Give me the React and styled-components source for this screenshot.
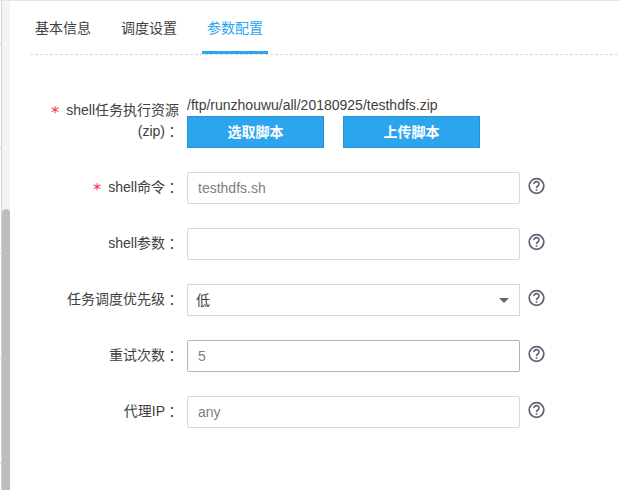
import React from 'react';
import styled, { createGlobalStyle } from 'styled-components';

const GlobalStyle = createGlobalStyle`
  * { box-sizing: border-box; }
  body {
    margin: 0;
    background: #fff;
    color: #404040;
    font: 14px/21px "Liberation Sans", "Noto Sans CJK SC", sans-serif;
  }
  button, input { font: inherit; }
`;

const Page = styled.div`
  display: flex;
  height: 490px;
  overflow: hidden;
  border-top: 1px solid #e2e6ec;
`;

const Gutter = styled.div`
  flex: none;
  width: 2px;
  border-right: 1px solid #c9d3e4;
  padding-top: 42px;
  display: flex;
  flex-direction: column;
  gap: 104px;
`;

const Tick = styled.div`
  flex: none;
  height: 1px;
  background: #c9d3e4;
`;

const ScrollTrack = styled.div`
  flex: none;
  width: 8px;
  padding-top: 208px;
  background: #f4f4f4;
`;

const ScrollThumb = styled.div`
  height: 300px;
  border-radius: 4px;
  background: #bdbdbd;
`;

const Content = styled.main`
  flex: 1;
  padding-left: 20px;
`;

const TabBar = styled.nav`
  display: flex;
  gap: 20px;
  height: 54px;
  background: repeating-linear-gradient(to right, #d9d9d9 0 3px, transparent 3px 5px) left bottom / 588px 1px no-repeat;
`;

const Tab = styled.button`
  width: 66px;
  height: 53px;
  padding: 5px 0 0;
  border: 0;
  border-bottom: 3px solid ${(p) => (p.$active ? '#2ca5ee' : 'transparent')};
  background: none;
  color: ${(p) => (p.$active ? '#2ca5ee' : '#404040')};
  line-height: 21px;
`;

const Form = styled.form`
  display: flex;
  flex-direction: column;
  gap: 24px;
  padding-top: 40px;
`;

const Row = styled.div`
  display: flex;
  min-height: 32px;
`;

const Label = styled.label`
  flex: none;
  width: 149px;
  margin-right: 8px;
  padding-top: 5px;
  text-align: right;
  white-space: nowrap;
`;

const Colon = styled.span`
  display: inline-block;
  width: 14px;
  font-family: "Noto Sans CJK TC", sans-serif;
  line-height: 14px;
  vertical-align: -1px;
`;

const Required = styled.span`
  display: inline-block;
  width: 9px;
  margin-right: 7px;
  color: #f5333f;
  font-family: "DejaVu Sans Mono", monospace;
  font-size: 16px;
  line-height: 14px;
  vertical-align: -3px;
`;

const Resource = styled.div`
  display: flex;
  flex-direction: column;
  height: 53px;
`;

const Path = styled.div`
  height: 21px;
  line-height: 21px;
`;

const Actions = styled.div`
  display: flex;
  gap: 19px;
`;

const Button = styled.button`
  width: 137px;
  height: 32px;
  padding: 0;
  border: 1px solid #2493d6;
  background: #2ca5ee;
  color: #fff;
  font-weight: 700;
`;

const Input = styled.input`
  width: 333px;
  height: 32px;
  padding: 0 10px 1px;
  border: 1px solid ${(p) => (p.$active ? '#b5b5b5' : '#d9d9d9')};
  border-radius: 2px;
  outline: 0;
  background: #fff;
  color: #808080;
`;

const Select = styled.div`
  display: flex;
  align-items: center;
  justify-content: space-between;
  width: 333px;
  height: 32px;
  padding: 0 10px 0 8px;
  border: 1px solid #d9d9d9;
`;

const Caret = styled.span`
  border: 5px solid transparent;
  border-top-color: #626270;
  border-bottom: 0;
`;

const HelpIcon = styled.svg`
  flex: none;
  width: 18px;
  height: 18px;
  margin: 5px 0 0 8px;
  fill: none;
  stroke: #626270;
  stroke-width: 1.7;
`;

const tabs = ['基本信息', '调度设置', '参数配置'];

function Help() {
  return (
    <HelpIcon viewBox="0 0 18 18">
      <circle cx="8.5" cy="9" r="7.3" />
      <path d="M6.1 7.2A2.4 2.4 0 1 1 9.9 8.9Q8.5 9.9 8.5 11" />
      <path d="M8.5 12v1.6" />
    </HelpIcon>
  );
}

function Field({ label, required, children }) {
  return (
    <Row>
      <Label>
        {required && <Required>*</Required>}
        {label}
        <Colon>：</Colon>
      </Label>
      {children}
      <Help />
    </Row>
  );
}

export default function App() {
  return (
    <Page>
      <GlobalStyle />
      <Gutter>
        {[0, 1, 2, 3, 4].map((n) => <Tick key={n} />)}
      </Gutter>
      <ScrollTrack><ScrollThumb /></ScrollTrack>
      <Content>
        <TabBar>
          {tabs.map((t, i) => <Tab key={t} $active={i === 2}>{t}</Tab>)}
        </TabBar>
        <Form>
          <Row>
            <Label>
              <Required>*</Required>shell任务执行资源
              <br />
              (zip)<Colon>：</Colon>
            </Label>
            <Resource>
              <Path>/ftp/runzhouwu/all/20180925/testhdfs.zip</Path>
              <Actions>
                <Button type="button">选取脚本</Button>
                <Button type="button">上传脚本</Button>
              </Actions>
            </Resource>
          </Row>
          <Field label="shell命令" required><Input defaultValue="testhdfs.sh" /></Field>
          <Field label="shell参数"><Input /></Field>
          <Field label="任务调度优先级"><Select>低<Caret /></Select></Field>
          <Field label="重试次数"><Input $active defaultValue="5" /></Field>
          <Field label="代理IP"><Input defaultValue="any" /></Field>
        </Form>
      </Content>
    </Page>
  );
}
